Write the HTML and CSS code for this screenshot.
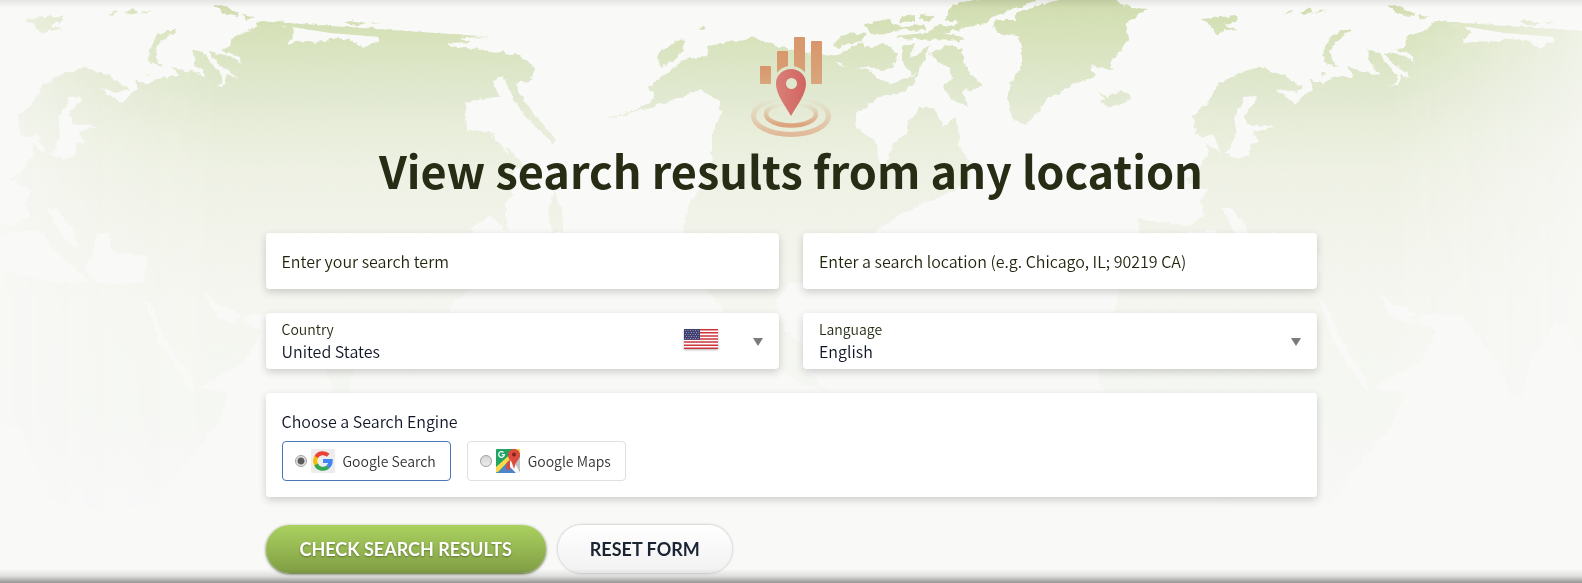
FILE: index.html
```html
<!DOCTYPE html>
<html lang="en">
<head>
  <meta charset="UTF-8">
  <meta name="viewport" content="width=device-width, initial-scale=1.0">
  <title>View search results from any location</title>
  <link rel="stylesheet" href="styles.css">
</head>
<body>
  <main class="hero">
    <svg class="map" viewBox="0 0 1582 583" preserveAspectRatio="xMidYMin slice" aria-hidden="true">
      <defs>
        <linearGradient id="land" gradientUnits="userSpaceOnUse" x1="0" y1="0" x2="0" y2="583">
          <stop offset="0" stop-color="#d0dcae"/>
          <stop offset=".07" stop-color="#d8e3bd"/>
          <stop offset=".12" stop-color="#dde6c8"/>
          <stop offset=".17" stop-color="#e2e9d2"/>
          <stop offset=".23" stop-color="#e9eedb"/>
          <stop offset=".3" stop-color="#eef1e4"/>
          <stop offset=".4" stop-color="#f2f3ea"/>
          <stop offset=".52" stop-color="#f5f6f0"/>
          <stop offset=".7" stop-color="#f5f7f2"/>
          <stop offset=".86" stop-color="#f8f8f7"/>
        </linearGradient>
        <linearGradient id="fade" gradientUnits="userSpaceOnUse" x1="0" y1="0" x2="1582" y2="0">
          <stop offset="0" stop-color="#fff" stop-opacity=".3"/>
          <stop offset=".07" stop-color="#fff" stop-opacity=".75"/>
          <stop offset=".14" stop-color="#fff"/>
          <stop offset=".88" stop-color="#fff"/>
          <stop offset="1" stop-color="#fff" stop-opacity=".3"/>
        </linearGradient>
        <mask id="sides" maskUnits="userSpaceOnUse" x="0" y="0" width="1582" height="583">
          <rect width="1582" height="583" fill="url(#fade)"/>
        </mask>
        <filter id="coast" filterUnits="userSpaceOnUse" x="-10" y="-10" width="1602" height="603" color-interpolation-filters="sRGB">
          <feTurbulence type="fractalNoise" baseFrequency=".16" numOctaves="2" seed="4"/>
          <feDisplacementMap in="SourceGraphic" scale="6" xChannelSelector="R" yChannelSelector="G"/>
        </filter>
        <!-- Europe, Asia and Africa: drawn once, repeated past the Atlantic -->
        <path id="eurasia" fill-rule="evenodd" d="M18 115 32 105 44 84 62 74 85 67 110 76 128 88 122 93 100 88 115 100 122 104 127 97 138 89 134 79 148 84 158 78 180 76 172 67 205 76 195 62 192 50 204 52 212 64 222 75 222 84 214 86 224 86 226 75 238 78 228 71 218 64 208 52 230 56 241 63 236 55 222 50 230 46 232 37 245 32 257 27 256 22 262 21 470 36 490 37 460 38 472 42 448 43 450 46 520 55 534 68 532 80 515 84 522 98 538 118 555 138 553 144 530 122 514 100 507 83 502 75 492 82 500 97 490 98 466 102 467 130 490 132 505 150 515 165 512 195 505 205 508 232 490 216 470 228 490 250 480 280 450 305 445 340 425 330 415 370 395 330 380 322 355 360 347 398 336 396 322 362 298 330 288 315 255 314 232 318 262 330 245 362 196 388 228 393 218 424 180 470 155 505 95 510 50 500 20 430 -10 420 -60 410 -78 380 -70 340 -55 290 -20 280 -36 240 -37 218 12 226 30 215 25 203 32 190 10 180 24 170 28 160 33 155 32 143 40 150 62 159 75 156 76 144 84 142 78 132 100 127 72 124 70 113 82 100 80 96 69 97 66 105 58 118 61 133 54 151 47 154 40 142 37 133 28 138 20 134Z
          M274 24 290 25 295 32 288 44 300 41 318 42 335 38 350 40 365 48 372 43 380 42 376 36 330 31Z
          M46 208 56 208 70 226 80 246 74 248 60 232Z M98 232 108 234 112 252 146 256 144 282 100 284 84 268 92 256Z
          M0 234 40 230 54 250 90 282 60 284 0 270Z M144 298 152 306 166 340 192 380 194 396 184 380 160 344Z M203 290 216 304 230 308 246 320 232 322 218 318Z"/>
        <path id="strip" d="M256 21 480 36 380 37 330 33Z"/>
        <g id="arctic">
          <path d="M27 19 45 17 64 16 60 22 50 24 62 31 50 29 42 35 37 27Z M108 14 118 11 115 15Z M124 13 134 8 138 13 128 15Z M140 12 152 10 146 13Z M214 6 222 5 240 14 238 17 226 14Z M244 14 255 17 246 20Z M343 22 350 20 366 23 356 26Z M370 22 380 23 374 24Z M148 61 149 50 154 38 168 30 177 30 160 42 155 52 158 62 164 66 154 64Z M145 74 150 74 148 77Z M171 67 177 69 175 70Z"/>
        </g>
        <!-- North America with Greenland and Iceland -->
        <path id="america" d="M668 72 683 60 707 56 709 46 735 41 754 37 775 45 805 53 832 55 838 66 870 70 877 78 890 83 913 77 920 67 916 80 907 90 892 95 880 97 857 113 855 127 877 143 880 167 888 160 893 143 908 133 908 123 920 107 933 108 943 126 957 117 960 147 972 167 970 180 948 193 940 197 920 205 897 217 878 230 866 242 850 262 835 276 820 280 790 284 776 300 784 330 810 350 800 366 830 392 800 384 770 362 740 330 715 300 690 270 683 233 688 207 702 185 712 158 712 135 722 112 718 100 700 90 655 106 600 121 640 108 655 98 648 87Z
          M661 50 683 38 684 50 676 58 662 68 657 56Z M699 28 705 27 707 29 702 30Z
          M937 50 945 46 963 49 963 60 970 74 982 85 972 92 966 87 962 92 968 107 953 100 943 87 952 78 950 68 940 63 930 54Z
          M832 45 848 32 867 34 862 41 848 44 838 48Z M833 57 863 42 866 48 883 43 897 53 893 68 880 70 870 66 852 69 836 62Z
          M863 24 890 20 894 25 907 28 890 33 872 34Z M896 36 940 31 964 38 962 41 930 40 904 38Z M902 46 914 44 910 58 920 52 930 44 922 66 912 76 902 62Z M922 14 935 16 930 22 920 20Z M902 16 914 14 914 22 900 22Z
          M928 32 940 24 950 27 960 22 946 20 948 8 960 3 993 -4 1040 -4 1032 3 1013 9 993 17 985 24 967 27 950 32Z M904 27 924 24 926 30 910 31Z
          M1015 13 1040 5 1070 -3 1115 -3 1125 6 1147 9 1135 18 1125 25 1128 38 1120 52 1110 62 1112 70 1090 66 1097 76 1077 82 1063 92 1047 98 1037 113 1026 125 1012 118 1008 98 1010 85 1022 65 1022 45 1018 36 1000 34 993 27 995 20 1015 20Z
          M1098 92 1108 96 1113 93 1128 92 1131 99 1120 105 1110 107 1100 103 1106 99Z
          M505 146 514 154 530 175 526 176 512 162Z M555 190 562 210 564 232 552 232 548 210Z"/>
      </defs>
      <g mask="url(#sides)" fill="url(#land)">
        <g filter="url(#coast)">
          <use href="#america"/>
          <use href="#eurasia"/>
          <use href="#arctic"/>
        </g>
        <use href="#strip"/>
        <g filter="url(#coast)">
          <use href="#eurasia" x="1175"/>
          <use href="#arctic" x="1175"/>
        </g>
        <use href="#strip" x="1175"/>
      </g>
    </svg>

    <div class="content">
      <header class="intro">
        <svg class="logo" viewBox="0 0 80 102" aria-hidden="true">
          <defs>
            <linearGradient id="bar" x1="0" y1="0" x2="0" y2="1">
              <stop offset="0" stop-color="#d9966c"/>
              <stop offset="1" stop-color="#d8a67b"/>
            </linearGradient>
            <linearGradient id="pin" x1="0" y1="0" x2="1" y2="0">
              <stop offset="0" stop-color="#d98078"/>
              <stop offset="1" stop-color="#d26460"/>
            </linearGradient>
            <linearGradient id="ring" x1="0" y1="0" x2="0" y2="1">
              <stop offset=".05" stop-color="#dba27c" stop-opacity="0"/>
              <stop offset="1" stop-color="#dba27c"/>
            </linearGradient>
            <mask id="cut">
              <rect width="80" height="102" fill="#fff"/>
              <circle cx="40" cy="48" r="18" fill="#000"/>
            </mask>
          </defs>
          <g fill="url(#bar)" mask="url(#cut)">
            <rect x="9" y="30" width="11" height="18" rx="1"/>
            <rect x="26" y="15" width="11" height="40" rx="1"/>
            <rect x="43" y="1" width="11" height="54" rx="1"/>
            <rect x="60" y="5" width="11" height="43" rx="1"/>
          </g>
          <ellipse cx="40" cy="80" rx="37.500" ry="18.500" fill="none" stroke="url(#ring)" stroke-width="5" opacity=".7"/>
          <ellipse cx="40" cy="78" rx="25" ry="11.500" fill="none" stroke="url(#ring)" stroke-width="4.500"/>
          <path fill="url(#pin)" fill-rule="evenodd" d="M40 33c-8.500 0-15 6.500-15 14.500C25 58 33 68 40 80c7-12 15-22 15-32.500C55 39.500 48.500 33 40 33zm.5 9a5.500 5.500 0 1 1 0 11 5.500 5.500 0 0 1 0-11z"/>
        </svg>
        <h1>View search results from any location</h1>
      </header>

      <form class="search-form">
        <input class="card text-field" type="text" aria-label="Search term" placeholder="Enter your search term">
        <input class="card text-field" type="text" aria-label="Search location" placeholder="Enter a search location (e.g. Chicago, IL; 90219 CA)">

        <div class="card select-field">
          <label for="country">Country</label>
          <select id="country">
            <option>United States</option>
          </select>
          <svg class="flag" viewBox="0 0 34 20" aria-hidden="true">
            <rect width="34" height="20" fill="#fff"/>
            <path stroke="#cb343c" stroke-width="1.540" d="M0 .77h34M0 3.850h34M0 6.920h34M0 10h34M0 13.080h34M0 16.150h34M0 19.230h34"/>
            <rect width="16" height="10.800" fill="#3f406f"/>
            <path stroke="#9a9bbb" stroke-width="1" stroke-dasharray="1 1.500" d="M1 1.500h14M2 3.500h13M1 5.500h14M2 7.500h13M1 9.500h14"/>
          </svg>
        </div>
        <div class="card select-field">
          <label for="language">Language</label>
          <select id="language">
            <option>English</option>
          </select>
        </div>

        <fieldset class="card engines">
          <legend>Choose a Search Engine</legend>
          <div class="engine-list">
            <label class="engine">
              <input type="radio" name="engine" checked>
              <svg class="engine-icon" viewBox="0 0 24 24" aria-hidden="true">
                <rect width="24" height="24" rx="1" fill="#ededed"/>
                <g fill="none" stroke-width="4">
                  <path stroke="#ea4335" d="M5.100 8.200A7.700 7.700 0 0 1 17.200 6.300"/>
                  <path stroke="#fbbc05" d="M5.200 15.700A7.700 7.700 0 0 1 5.200 8"/>
                  <path stroke="#34a853" d="M17 17.900A7.700 7.700 0 0 1 5 15.500"/>
                  <path stroke="#4285f4" d="M12 12h7.700A7.700 7.700 0 0 1 16.800 18"/>
                </g>
              </svg>
              <span>Google Search</span>
            </label>
            <label class="engine">
              <input type="radio" name="engine">
              <svg class="engine-icon" viewBox="0 0 24 24" aria-hidden="true">
                <rect width="24" height="24" rx="1" fill="#1fa463"/>
                <path fill="#c3c3c3" d="M13 12 24 8v14z"/>
                <path fill="#fff" d="m12 13 4-3 8 13v1h-2z"/>
                <path fill="#4f84c9" d="m12 13 11 11H1z"/>
                <path fill="#fff" d="m14 13 9 11h-3L12 16z"/>
                <path fill="#fdd94a" d="M0 18 20 0h4L2 23H0z"/>
                <path fill="#fdd94a" d="M22 0h2v7z"/>
                <path fill="#dc4b3e" d="M18 0c-3.500 0-6 2.500-6 6 0 4 2.500 5 3.500 7s1.500 4 2.500 7c1-3 1-5 2.500-7S24 9 24 5.500C24 2.500 21.500 0 18 0z"/>
                <path fill="#dc4b3e" d="m11 13 3-2v10l-4-1z"/>
                <circle cx="18" cy="5.500" r="2" fill="#7d231c"/>
                <path fill="none" stroke="#fff" stroke-width="1.300" d="M7.500 3.500A2.800 2.800 0 1 0 8.300 5.700H5.800"/>
              </svg>
              <span>Google Maps</span>
            </label>
          </div>
        </fieldset>

        <div class="actions">
          <button class="btn btn-primary" type="submit">CHECK SEARCH RESULTS</button>
          <button class="btn btn-plain" type="reset">RESET FORM</button>
        </div>
      </form>
    </div>
  </main>
</body>
</html>
```
FILE: styles.css
```css
* {
  box-sizing: border-box;
}

body {
  margin: 0;
  background-color: #f9f9f8;
  color: #262d14;
  font-family: "Noto Sans CJK SC", "Noto Sans", sans-serif;
  font-size: 16px;
  font-weight: 350;
}

.hero {
  position: relative;
  min-height: 100vh;
  padding: 36px 24px 10px;
  overflow: hidden;
}

.hero::after {
  content: "";
  position: absolute;
  inset: 0;
  pointer-events: none;
  background:
    linear-gradient(rgba(0, 0, 0, 0.08), transparent) top / 100% 8px no-repeat,
    linear-gradient(transparent, rgba(0, 0, 0, 0.1) 50%, rgba(0, 0, 0, 0.4)) bottom / 100% 14px no-repeat;
}

.map {
  position: absolute;
  top: 0;
  left: 0;
  width: 100%;
  height: 100%;
}

.content {
  position: relative;
  max-width: 1051px;
  margin: 0 auto;
}

.intro {
  text-align: center;
}

.logo {
  display: block;
  width: 80px;
  height: 102px;
  margin: 0 auto;
}

h1 {
  margin: 0 0 31px;
  font-size: 45px;
  font-weight: 700;
  line-height: 64px;
}

.search-form {
  display: grid;
  grid-template-columns: 1fr 1fr;
  gap: 24px;
}

.card {
  min-width: 0;
  margin: 0;
  border: none;
  border-radius: 4px;
  background-color: #fff;
  box-shadow: 0 3px 8px rgba(0, 0, 0, 0.18);
}

.text-field {
  width: 100%;
  height: 56px;
  padding: 0 16px;
  font: inherit;
  color: #262d14;
}

.text-field::placeholder {
  color: #1f260e;
  opacity: 1;
}

.select-field {
  position: relative;
  height: 56px;
}

.select-field label {
  position: absolute;
  top: 6px;
  left: 16px;
  font-size: 14px;
  line-height: 20px;
  color: #262d14;
  pointer-events: none;
}

.select-field select {
  width: 100%;
  height: 56px;
  padding: 26px 16px 6px;
  border: none;
  border-radius: 4px;
  background: none;
  appearance: none;
  font: inherit;
  line-height: 24px;
  color: #0f1626;
}

.select-field::after {
  content: "";
  position: absolute;
  top: 25px;
  right: 16px;
  border: 5px solid transparent;
  border-top: 8px solid #7b7b7b;
  border-bottom: none;
  pointer-events: none;
}

.flag {
  position: absolute;
  top: 16px;
  right: 61px;
  width: 34px;
  height: 20px;
  box-shadow: 0 1px 2px rgba(0, 0, 0, 0.3);
  pointer-events: none;
}

.engines {
  grid-column: 1 / -1;
  padding: 16px;
}

.engines legend {
  float: left;
  width: 100%;
  padding: 0;
  line-height: 24px;
  margin-bottom: 8px;
  color: #0f1626;
}

.engine-list {
  clear: both;
  display: flex;
  gap: 16px;
}

.engine {
  display: flex;
  align-items: center;
  height: 40px;
  padding: 0 14px 0 12px;
  border: 1px solid #e0e0e0;
  border-radius: 4px;
  font-size: 14px;
  color: #333;
}

.engine:has(input:checked) {
  border-color: #4a77b8;
}

.engine input {
  width: 12px;
  height: 12px;
  margin: 0 4px 0 0;
  border: 1px solid #a0a0a0;
  border-radius: 50%;
  background: linear-gradient(#d6d6d6, #ececec);
  appearance: none;
}

.engine input:checked {
  background: radial-gradient(circle, #5c5c5c 3px, #e4e4e4 4px);
}

.engine-icon {
  width: 24px;
  height: 24px;
  margin-right: 8px;
}

.actions {
  grid-column: 1 / -1;
  display: flex;
  gap: 12px;
  padding-top: 4px;
}

.btn {
  height: 48px;
  padding: 0 32px;
  border: none;
  border-radius: 24px;
  font-family: Lato, sans-serif;
  font-size: 18px;
  font-weight: 700;
  cursor: pointer;
}

.btn-primary {
  padding: 0 34px;
  background: linear-gradient(#abd160, #809e44);
  box-shadow: 0 1px 3px rgba(60, 80, 20, 0.9);
  color: #fff;
  text-shadow: 0 1px 2px rgba(0, 0, 0, 0.35);
}

.btn-plain {
  background: linear-gradient(#fff, #f1f1f1);
  box-shadow: 0 0 3px rgba(0, 0, 0, 0.3);
  color: #1b2433;
}

@media (max-width: 700px) {
  .search-form {
    grid-template-columns: 1fr;
  }

  h1 {
    font-size: 32px;
    line-height: 40px;
  }

  .actions {
    flex-wrap: wrap;
  }
}
```
